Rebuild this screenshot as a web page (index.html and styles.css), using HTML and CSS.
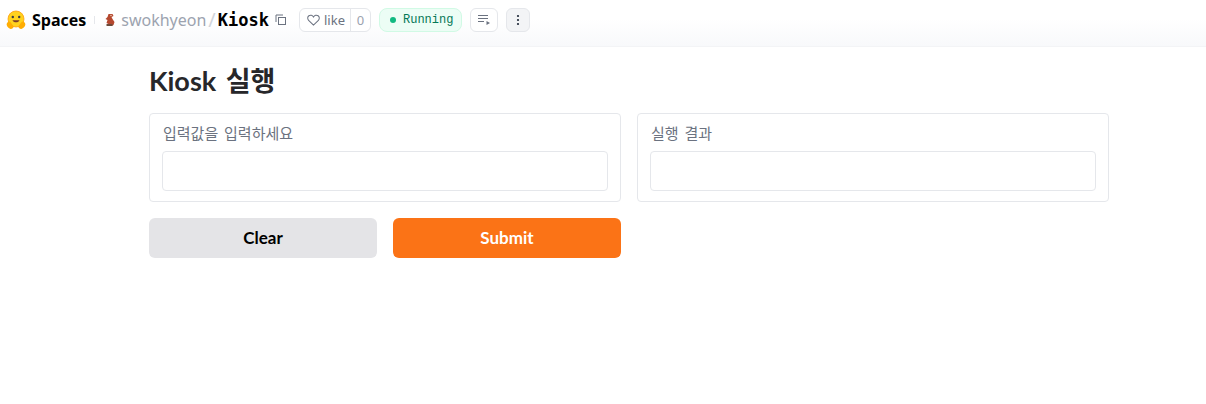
FILE: index.html
```html
<!DOCTYPE html>
<html lang="ko">

<head>
    <title>Kiosk - a Hugging Face Space</title>
    <meta charset="UTF-8">
    <link rel="stylesheet" href="styles.css">
</head>

<body>
    <header id="spaceHeader">
        <a class="brand" href="#">
            <svg class="brand-logo" viewBox="0 0 20 20" aria-hidden="true">
                <circle cx="10" cy="9" r="8" fill="#ffd21e" />
                <circle cx="10" cy="9" r="8" fill="none" stroke="#ff9d0b" stroke-width=".8" />
                <circle cx="6.8" cy="7" r="1.2" fill="#3a3b45" />
                <circle cx="13.2" cy="7" r="1.2" fill="#3a3b45" />
                <path d="M6.5 10.2c1 2.8 6 2.8 7 0z" fill="#7a3b2a" />
                <path d="M.8 13.5c1-2.4 3-2.600 4-1l2.600 3.600c.6 1.600-.8 3-2.600 2.800-2-.2-4.800-3-4-5.400zM19.200 13.500c-1-2.400-3-2.600-4-1l-2.600 3.600c-.6 1.600.8 3 2.600 2.800 2-.2 4.800-3 4-5.400z" fill="#ffad03" />
            </svg>
            <span class="brand-name">Spaces</span>
        </a>
        <span class="divider"></span>
        <svg class="avatar" viewBox="0 0 12 14" aria-hidden="true">
            <path d="M5 1h4l1 2-2 1 1 2 2 3-1 3-2 1H4l1-2-2-1 1-3-2-1 2-2z" fill="#b5482f" />
            <path d="M3 11h6v2H3z" fill="#6d4a3a" />
            <circle cx="7.500" cy="2.500" r=".7" fill="#f4e3c8" />
        </svg>
        <a class="owner" href="#">swokhyeon</a>
        <span class="slash">/</span>
        <a class="repo" href="#">Kiosk</a>
        <button class="copyButton" aria-label="Copy">
            <svg viewBox="0 0 12 12" aria-hidden="true">
                <path d="M1 8V1h7" fill="none" stroke="#6b7280" />
                <rect x="3.500" y="3.500" width="7" height="7" fill="none" stroke="#6b7280" />
            </svg>
        </button>
        <div class="likeBox">
            <span class="likeBox-label">
                <svg viewBox="0 0 14 13" aria-hidden="true">
                    <path d="M7 12 1.700 6.800C.2 5.300.5 3 2 1.900 3.700.8 5.900 1.300 7 3.200 8.100 1.300 10.300.8 12 1.900c1.500 1.100 1.800 3.400.3 4.900z" fill="none" stroke="#6b7280" stroke-width="1.100" />
                </svg>
                like
            </span>
            <span class="likeBox-count">0</span>
        </div>
        <div class="status"><span class="status-dot"></span>Running</div>
        <button class="iconButton" aria-label="Logs">
            <svg viewBox="0 0 14 12" aria-hidden="true">
                <path d="M1 1.500h10M1 4.500h10M1 7.500h6" fill="none" stroke="#6b7280" />
                <path d="M9.500 7v4l3.500-2z" fill="#6b7280" />
            </svg>
        </button>
        <button class="iconButton iconButton-menu" aria-label="More">
            <svg viewBox="0 0 4 12" aria-hidden="true">
                <circle cx="2" cy="2" r="1.100" fill="#1f2937" />
                <circle cx="2" cy="6" r="1.100" fill="#1f2937" />
                <circle cx="2" cy="10" r="1.100" fill="#1f2937" />
            </svg>
        </button>
    </header>

    <main id="app">
        <h1 class="appTitle">Kiosk 실행</h1>
        <div class="columns">
            <label class="panel">
                <span class="panel-label">입력값을 입력하세요</span>
                <input class="panel-input" type="text">
            </label>
            <label class="panel">
                <span class="panel-label">실행 결과</span>
                <input class="panel-input" type="text">
            </label>
            <div class="actions">
                <button class="action action-clear">Clear</button>
                <button class="action action-submit">Submit</button>
            </div>
        </div>
    </main>
</body>

</html>
```

FILE: styles.css
```css
html,
button,
input {
    font-family: 'Lato', 'Noto Sans CJK KR', sans-serif;
}

body {
    margin: 0;
    background: white;
}

button {
    margin: 0;
    padding: 0;
}

a {
    text-decoration: none;
}

#spaceHeader {
    height: 47px;
    box-sizing: border-box;
    padding: 0 0 7px 6px;
    display: flex;
    align-items: center;
    background: linear-gradient(to bottom, #ffffff 40%, #f8f9fb);
    border-bottom: 1px solid #f3f4f6;
}

.brand {
    display: flex;
    align-items: center;
}

.brand-logo {
    width: 20px;
    height: 20px;
    margin-right: 6px;
}

.brand-name {
    font-family: 'Open Sans', sans-serif;
    font-size: 16px;
    font-weight: 700;
    color: black;
}

.divider {
    width: 1px;
    height: 8px;
    margin: 0 8px 0 8px;
    background: #e5e7eb;
}

.avatar {
    width: 13px;
    height: 14px;
    margin-right: 5px;
}

.owner {
    font-family: 'Noto Sans', sans-serif;
    font-size: 16px;
    color: #9ca3af;
}

.slash {
    font-family: 'Noto Sans', sans-serif;
    font-size: 20px;
    line-height: 20px;
    margin: 0 2px;
    color: #d1d5db;
}

.repo {
    font-family: 'DejaVu Sans Mono', monospace;
    font-size: 17px;
    font-weight: 700;
    color: black;
}

.copyButton {
    width: 12px;
    height: 12px;
    margin: 0 12px 0 6px;
    border: 0;
    background: transparent;
}

.copyButton svg {
    display: block;
    width: 12px;
    height: 12px;
}

.likeBox {
    height: 24px;
    box-sizing: border-box;
    width: 72px;
    display: flex;
    align-items: center;
    background: white;
    border: 1px solid #e5e7eb;
    border-radius: 6px;
    font-family: 'Noto Sans', sans-serif;
    font-size: 13px;
    color: #6b7280;
}

.likeBox-label {
    display: flex;
    align-items: center;
    gap: 4px;
    height: 100%;
    width: 51px;
    padding-left: 7px;
    box-sizing: border-box;
    border-right: 1px solid #e5e7eb;
}

.likeBox-label svg {
    width: 13px;
    height: 12px;
}

.likeBox-count {
    flex: 1;
    text-align: center;
    color: #9ca3af;
}

.status {
    width: 83px;
    height: 24px;
    box-sizing: border-box;
    margin-left: 8px;
    padding-left: 10px;
    display: flex;
    align-items: center;
    gap: 7px;
    background: #ecfdf5;
    border: 1px solid #d1fae5;
    border-radius: 8px;
    font-family: 'Liberation Mono', monospace;
    font-size: 12px;
    color: #047857;
}

.status-dot {
    width: 6px;
    height: 6px;
    border-radius: 50%;
    background: #10b981;
}

.iconButton {
    width: 28px;
    height: 24px;
    margin-left: 8px;
    display: flex;
    align-items: center;
    justify-content: center;
    background: white;
    border: 1px solid #e5e7eb;
    border-radius: 6px;
}

.iconButton svg {
    width: 14px;
    height: 12px;
}

.iconButton-menu {
    width: 24px;
    background: #f3f4f6;
}

.iconButton-menu svg {
    width: 4px;
}

#app {
    width: 960px;
    margin-left: 149px;
}

.appTitle {
    margin: 0;
    padding-top: 16px;
    font-size: 27px;
    line-height: 36px;
    font-weight: 700;
    word-spacing: 3px;
    color: #27272a;
}

.columns {
    display: grid;
    grid-template-columns: 472px 472px;
    gap: 16px;
    margin-top: 14px;
}

.panel {
    display: block;
    box-sizing: border-box;
    height: 89px;
    padding: 9px 12px 10px 12px;
    border: 1px solid #e5e7eb;
    border-radius: 4px;
}

.panel-label {
    display: block;
    padding-left: 1px;
    font-size: 15px;
    line-height: 20px;
    word-spacing: 2px;
    color: #6b7280;
}

.panel-input {
    display: block;
    box-sizing: border-box;
    width: 100%;
    height: 40px;
    margin-top: 8px;
    border: 1px solid #e5e7eb;
    border-radius: 4px;
    background: white;
}

.actions {
    display: flex;
    gap: 16px;
}

.action {
    flex: 1;
    height: 40px;
    padding-bottom: 2px;
    border: 0;
    border-radius: 6px;
    font-size: 17px;
    font-weight: 700;
}

.action-clear {
    background: #e4e4e7;
    color: black;
}

.action-submit {
    background: #fb7316;
    color: white;
}
```
